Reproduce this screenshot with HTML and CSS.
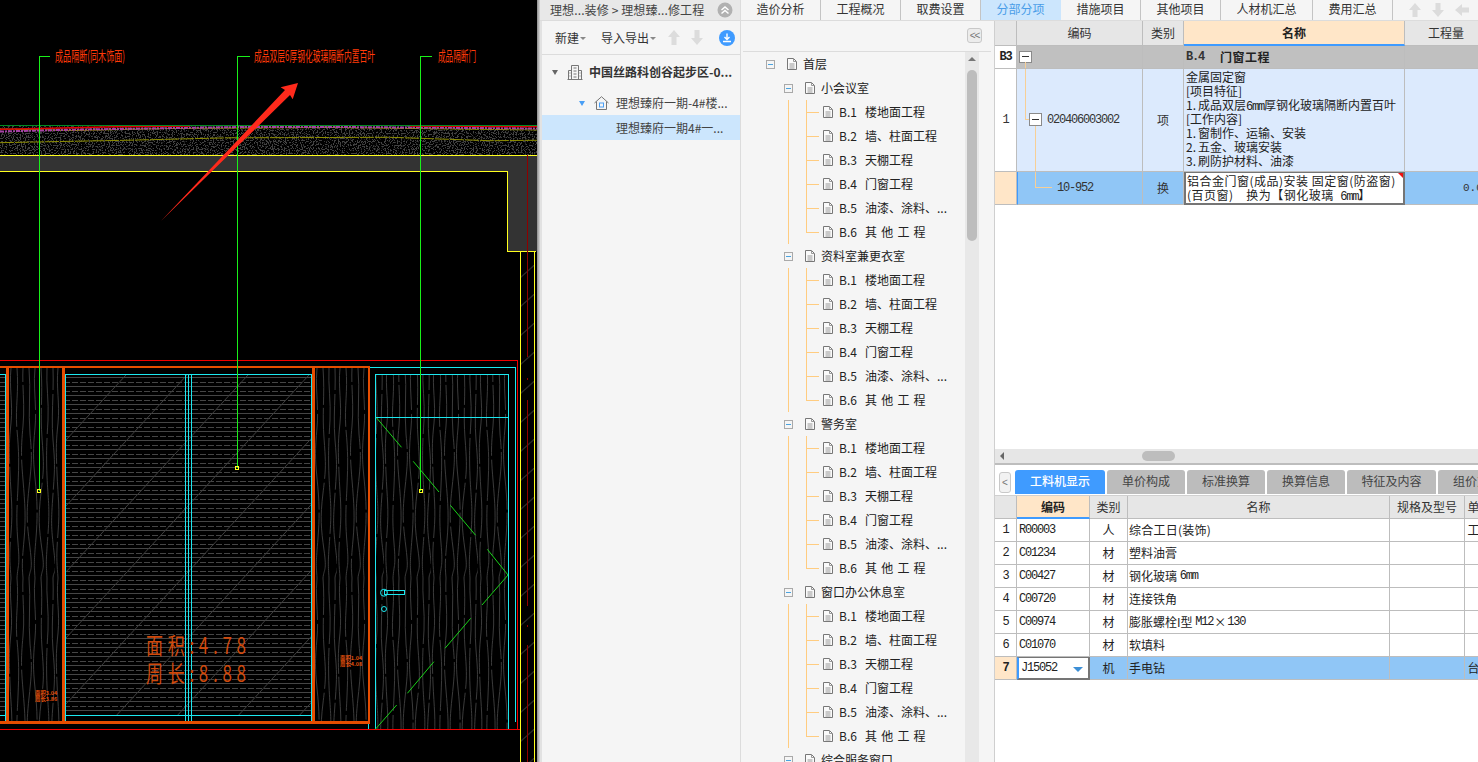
FILE: index.html
```html
<!DOCTYPE html>
<html lang="zh-CN">
<head>
<meta charset="utf-8">
<title>理想臻府一期</title>
<link rel="stylesheet" href="styles.css">
</head>
<body>
<svg class="defs" width="0" height="0">
  <symbol id="doc" viewBox="0 0 10 12"><path class="doc-page" d="M.5.5h6l3 3v8H.5z"/><path class="doc-fold" d="M6.500.5v3h3M2.500 6h5M2.500 8h5M2.500 10h5"/></symbol>
</svg>
<div class="app">
  <div class="cad">
    <svg class="cad-svg" width="537" height="762" viewBox="0 0 537 762">
      <defs>
        <pattern id="wood" width="47" height="210" patternUnits="userSpaceOnUse" x="8" y="368">
          <g class="grain">
            <path d="M3 0C1 20 5 35 3 55S1 80 2 105S5 140 3 165S2 195 3 210"/>
            <path d="M9 0C11 25 7 40 9 62S11 95 10 118S8 150 10 175S10 195 9 210"/>
            <path d="M15 0C14 18 17 36 15 58S13 88 15 112S18 150 16 172S14 198 15 210"/>
            <path d="M21 0C23 22 20 44 22 66S24 92 21 120S19 155 22 180S22 200 21 210"/>
            <path d="M27 0C25 20 29 38 27 60S25 90 27 110S30 145 28 170S26 195 27 210"/>
            <path d="M33 0C35 26 32 42 34 70S36 100 33 125S31 160 34 182S34 200 33 210"/>
            <path d="M39 0C38 16 41 34 40 52S38 84 39 108S42 138 40 166S38 194 39 210"/>
            <path d="M45 0C46 24 43 48 45 72S47 98 45 126S43 158 46 184S46 200 45 210"/>
          </g>
        </pattern>
        <pattern id="louvre" width="8" height="9" patternUnits="userSpaceOnUse" y="375">
          <path class="hatch flat" d="M0 2.500H8"/>
          <path class="hatch flat" d="M0 7H5.500"/>
        </pattern>
        <pattern id="diag" width="61" height="66" patternUnits="userSpaceOnUse" x="65" y="375">
          <path class="hatch dim" d="M0 66L61 0"/>
        </pattern>
        <pattern id="strip" width="14" height="29" patternUnits="userSpaceOnUse" x="520.500" y="265">
          <path class="hatch" d="M0 12.500L14 0"/>
        </pattern>
        <filter id="speck" x="0" y="0" width="100%" height="100%" color-interpolation-filters="sRGB">
          <feTurbulence type="fractalNoise" baseFrequency=".75" numOctaves="2" seed="7"/>
          <feColorMatrix values="0 0 0 0 .26 0 0 0 0 .26 0 0 0 0 .26 0 0 0 14 -7.300"/>
        </filter>
      </defs>

      <rect class="speckle" x="0" y="126" width="537" height="29" filter="url(#speck)"/>
      <path class="band-olive" d="M0 142.700L60 141.500L125 140.300L230 137.800L390 137.300L490 140.700L537 140.300"/>
      <path class="band-olive" d="M0 129L75 130.500L170 128.500L330 127.500L537 130"/>
      <path class="band-purple" d="M0 131.500L80 129.500L240 127L340 127L537 128.500"/>
      <path class="band-red" d="M0 129.300L40 128.500L115 126.700L190 126M410 126L537 126.600"/>
      <path class="band-green" d="M0 125.500H537"/>

      <path class="wall" d="M0 155.500H537V251.300H507.500V171.500H0z"/>
      <path class="yellow" d="M0 155.500H537M0 171.500H507.500V251.500H535.500M520.500 251.500V762M534.500 251.500V762"/>
      <rect class="strip" x="521" y="252" width="13" height="510"/>
      <path class="darkred" d="M527.500 155V357M527.500 378V380M527.500 400V606M527.500 625V627M527.500 645V762"/>

      <rect class="wood" x="8" y="368" width="56" height="354"/>
      <rect class="wood" x="315" y="368" width="53" height="354"/>
      <rect class="wood" x="376" y="375" width="132" height="354"/>
      <rect class="louvre" x="0" y="375" width="5" height="340"/>
      <rect class="louvre" x="66" y="375" width="245" height="340"/>
      <rect class="diag" x="66" y="375" width="245" height="340"/>

      <path class="cyan" d="M0 374.500H5.500V715.500H0M65.500 722V374.500H311.500V722M65.500 715.500H311.500M5.500 715.500V722M185.500 374.500V722M188.500 374.500V722M191.500 374.500V722"/>
      <path class="cyan" d="M369 367.500H515.500V722M368.500 722V729M375.500 729V374.500H508.500V729M375.500 417.500H508.500"/>
      <path class="red" d="M0 360.500H517.500V729.500M0 729.500H520"/>
      <path class="orange" d="M0 367H368.800V722.700H0M7.200 367V722.700M63.400 367V722.700M313.700 367V722.700"/>

      <path class="door-green" d="M376.400 417.700L401.500 447.300M413.200 461.300L439 492M450.400 505.300L475.600 535.300M487.300 549.300L508 575L482 605M470.700 618.300L445 648.300M433.900 661.700L407.400 693.300M396.700 705L375.300 729.300"/>
      <circle class="round" cx="384" cy="592.700" r="3.500"/>
      <rect class="cyan" x="384.500" y="590.500" width="20" height="4"/>
      <circle class="round" cx="384" cy="609" r="2.500"/>

      <path class="leader" d="M50 56.500H39.500V491M250 56.500H237.500V468M432 56.500H420.500V491"/>
      <path class="leader-end" d="M37.500 489.500h3v3h-3zM235.500 466.500h3v3h-3zM419.500 489.500h3v3h-3z"/>

      <text class="note" x="55" y="33" textLength="70" lengthAdjust="spacingAndGlyphs">成品隔断(同木饰面)</text>
      <text class="note" x="254" y="33" textLength="121" lengthAdjust="spacingAndGlyphs">成品双层6厚钢化玻璃隔断内置百叶</text>
      <text class="note" x="438" y="33" textLength="38" lengthAdjust="spacingAndGlyphs">成品隔断门</text>

      <text class="area" x="146" y="492" textLength="100" lengthAdjust="spacing">面积:4.78</text>
      <text class="area" x="146" y="512.500" textLength="100" lengthAdjust="spacing">周长:8.88</text>
      <text class="tiny" x="35" y="695">面积3.04</text>
      <text class="tiny" x="35" y="701">周长3.86</text>
      <text class="tiny" x="340" y="660">面积1.04</text>
      <text class="tiny" x="340" y="666">周长4.08</text>

      <polygon class="arrow" points="298,83 280.600,87.300 285,90 161,221 290,95 292.700,99.300"/>
    </svg>
  </div>
  <div class="divider"></div>

  <aside class="sidebar">
    <div class="crumbs">
      <span class="crumb-text">理想...装修 &gt; 理想臻...修工程</span>
      <svg class="crumb-btn" width="16" height="16" viewBox="0 0 16 16"><circle class="c-gray" cx="8" cy="8" r="7.500"/><path class="chev" d="M4.500 8L8 5l3.500 3M4.500 11.500L8 8.500l3.500 3"/></svg>
    </div>
    <div class="toolbar">
      <span class="tool">新建</span><i class="caret"></i>
      <span class="tool tool-io">导入导出</span><i class="caret"></i>
      <svg class="tool-arrow arrow-up" width="12" height="15" viewBox="0 0 12 15"><path class="a-gray" d="M6 0L12 7H8.500V15H3.500V7H0z"/></svg>
      <svg class="tool-arrow arrow-down" width="12" height="15" viewBox="0 0 12 15"><path class="a-gray" d="M6 15L12 8H8.500V0H3.500V8H0z"/></svg>
      <svg class="tool-dl" width="16" height="16" viewBox="0 0 16 16"><circle class="c-blue" cx="8" cy="8" r="8"/><path class="dl" d="M8 3.500V9M5.500 7L8 9.500 10.500 7M4 11.500H12"/></svg>
    </div>
    <ul class="projects">
      <li class="proj proj-root">
        <i class="tri tri-dark"></i>
        <svg class="proj-icon" width="16" height="16" viewBox="0 0 16 16"><path class="bld" d="M.5 15.500h15M1.500 15.500V6.500h3v9M4.500 15.500V1.500h7v14M11.500 6.500h3v9M6.500 4h3M6.500 7h3M6.500 10h3M6.500 13h3M2.500 9h1M2.500 12h1M12.500 9h1M12.500 12h1"/></svg>
        <span class="proj-name proj-bold">中国丝路科创谷起步区-0...</span>
      </li>
      <li class="proj proj-sub">
        <i class="tri tri-blue"></i>
        <svg class="proj-icon" width="15" height="14" viewBox="0 0 15 14"><path class="bld" d="M.5 7L7.500.7 14.500 7M2.500 5.500V13.500H12.500V5.500"/><rect class="home-door" x="5.500" y="7" width="4" height="4"/></svg>
        <span class="proj-name">理想臻府一期-4#楼...</span>
      </li>
      <li class="proj proj-sel"><span class="proj-name">理想臻府一期4#一...</span></li>
    </ul>
  </aside>

  <div class="work">
    <nav class="tabs">
      <a class="tab">造价分析</a>
      <a class="tab">工程概况</a>
      <a class="tab">取费设置</a>
      <a class="tab tab-on">分部分项</a>
      <a class="tab">措施项目</a>
      <a class="tab">其他项目</a>
      <a class="tab tab-wide">人材机汇总</a>
      <a class="tab">费用汇总</a>
      <div class="tab-tools">
        <svg width="12" height="14" viewBox="0 0 12 14"><path class="a-gray" d="M6 0L12 7H8.500V14H3.500V7H0z"/></svg>
        <svg width="12" height="14" viewBox="0 0 12 14"><path class="a-gray" d="M6 14L12 7H8.500V0H3.500V7H0z"/></svg>
        <svg width="14" height="12" viewBox="0 0 14 12"><path class="a-gray" d="M0 6L7 0V3.500H14V8.500H7V12z"/></svg>
      </div>
    </nav>
    <div class="panes">
      <section class="tree">
        <div class="tree-head"><button class="fold">&lt;&lt;</button></div>
        <div class="tree-body">
          <div class="tree-list">
            <div class="node root"><i class="box"></i><svg class="doc"><use href="#doc"/></svg><span>首层</span></div>

            <div class="node lvl2"><i class="box"></i><svg class="doc"><use href="#doc"/></svg><span>小会议室</span></div>
            <div class="leaves">
              <div class="node leaf"><svg class="doc"><use href="#doc"/></svg><b class="code">B.1</b><span>楼地面工程</span></div>
              <div class="node leaf"><svg class="doc"><use href="#doc"/></svg><b class="code">B.2</b><span>墙、柱面工程</span></div>
              <div class="node leaf"><svg class="doc"><use href="#doc"/></svg><b class="code">B.3</b><span>天棚工程</span></div>
              <div class="node leaf"><svg class="doc"><use href="#doc"/></svg><b class="code">B.4</b><span>门窗工程</span></div>
              <div class="node leaf"><svg class="doc"><use href="#doc"/></svg><b class="code">B.5</b><span>油漆、涂料、...</span></div>
              <div class="node leaf"><svg class="doc"><use href="#doc"/></svg><b class="code">B.6</b><span>其 他 工 程</span></div>
            </div>

            <div class="node lvl2"><i class="box"></i><svg class="doc"><use href="#doc"/></svg><span>资料室兼更衣室</span></div>
            <div class="leaves">
              <div class="node leaf"><svg class="doc"><use href="#doc"/></svg><b class="code">B.1</b><span>楼地面工程</span></div>
              <div class="node leaf"><svg class="doc"><use href="#doc"/></svg><b class="code">B.2</b><span>墙、柱面工程</span></div>
              <div class="node leaf"><svg class="doc"><use href="#doc"/></svg><b class="code">B.3</b><span>天棚工程</span></div>
              <div class="node leaf"><svg class="doc"><use href="#doc"/></svg><b class="code">B.4</b><span>门窗工程</span></div>
              <div class="node leaf"><svg class="doc"><use href="#doc"/></svg><b class="code">B.5</b><span>油漆、涂料、...</span></div>
              <div class="node leaf"><svg class="doc"><use href="#doc"/></svg><b class="code">B.6</b><span>其 他 工 程</span></div>
            </div>

            <div class="node lvl2"><i class="box"></i><svg class="doc"><use href="#doc"/></svg><span>警务室</span></div>
            <div class="leaves">
              <div class="node leaf"><svg class="doc"><use href="#doc"/></svg><b class="code">B.1</b><span>楼地面工程</span></div>
              <div class="node leaf"><svg class="doc"><use href="#doc"/></svg><b class="code">B.2</b><span>墙、柱面工程</span></div>
              <div class="node leaf"><svg class="doc"><use href="#doc"/></svg><b class="code">B.3</b><span>天棚工程</span></div>
              <div class="node leaf"><svg class="doc"><use href="#doc"/></svg><b class="code">B.4</b><span>门窗工程</span></div>
              <div class="node leaf"><svg class="doc"><use href="#doc"/></svg><b class="code">B.5</b><span>油漆、涂料、...</span></div>
              <div class="node leaf"><svg class="doc"><use href="#doc"/></svg><b class="code">B.6</b><span>其 他 工 程</span></div>
            </div>

            <div class="node lvl2"><i class="box"></i><svg class="doc"><use href="#doc"/></svg><span>窗口办公休息室</span></div>
            <div class="leaves">
              <div class="node leaf"><svg class="doc"><use href="#doc"/></svg><b class="code">B.1</b><span>楼地面工程</span></div>
              <div class="node leaf"><svg class="doc"><use href="#doc"/></svg><b class="code">B.2</b><span>墙、柱面工程</span></div>
              <div class="node leaf"><svg class="doc"><use href="#doc"/></svg><b class="code">B.3</b><span>天棚工程</span></div>
              <div class="node leaf"><svg class="doc"><use href="#doc"/></svg><b class="code">B.4</b><span>门窗工程</span></div>
              <div class="node leaf"><svg class="doc"><use href="#doc"/></svg><b class="code">B.5</b><span>油漆、涂料、...</span></div>
              <div class="node leaf"><svg class="doc"><use href="#doc"/></svg><b class="code">B.6</b><span>其 他 工 程</span></div>
            </div>

            <div class="node lvl2"><i class="box"></i><svg class="doc"><use href="#doc"/></svg><span>综合服务窗口</span></div>
          </div>
          <div class="vscroll"><i class="v-up"></i><i class="v-thumb"></i></div>
        </div>
      </section>

      <main class="main">
        <div class="grid grid-top ghead">
          <div class="c"></div><div class="c">编码</div><div class="c">类别</div><div class="c c-active">名称</div><div class="c">工程量</div>
        </div>
        <div class="grid grid-top row-b3">
          <div class="c rh mono-b">B3</div>
          <div class="c c-wires"><i class="pm pm-a"></i><i class="wire wire-a"></i></div>
          <div class="c"></div>
          <div class="c c-left title"><b class="mono-b">B.4</b><b class="title-cn">门窗工程</b></div>
          <div class="c"></div>
        </div>
        <div class="grid grid-top row-item">
          <div class="c rh mono">1</div>
          <div class="c c-code"><i class="wire wire-b"></i><i class="wire wire-c"></i><i class="pm pm-b"></i><span class="mono">020406003002</span></div>
          <div class="c">项</div>
          <div class="c c-left lines item-lines">
            <div>金属固定窗</div>
            <div>[项目特征]</div>
            <div><span class="idx">1.</span>成品双层<span class="mono">6mm</span>厚钢化玻璃隔断内置百叶</div>
            <div>[工作内容]</div>
            <div><span class="idx">1.</span>窗制作、运输、安装</div>
            <div><span class="idx">2.</span>五金、玻璃安装</div>
            <div><span class="idx">3.</span>刷防护材料、油漆</div>
          </div>
          <div class="c"></div>
        </div>
        <div class="grid grid-top row-sub">
          <div class="c rh rh-on"></div>
          <div class="c c-sel c-code2"><i class="wire wire-d"></i><i class="wire wire-e"></i><span class="mono">10-952</span></div>
          <div class="c">换</div>
          <div class="c c-left c-edit lines edit-lines">
            <div>铝合金门窗(成品)安装 固定窗(防盗窗)</div>
            <div>(百页窗)    换为【钢化玻璃  <span class="mono">6mm</span>】</div>
            <i class="flag"></i>
          </div>
          <div class="c c-qty">0.06</div>
        </div>
        <div class="blank"></div>
        <div class="hscroll"><i class="h-left"></i><i class="h-thumb"></i></div>
        <div class="subtabs">
          <button class="sub-back">&lt;</button>
          <a class="sub sub-on sub-first">工料机显示</a>
          <a class="sub">单价构成</a>
          <a class="sub">标准换算</a>
          <a class="sub">换算信息</a>
          <a class="sub sub-wide">特征及内容</a>
          <a class="sub">组价方案</a>
        </div>
        <div class="grid grid-low ghead-low">
          <div class="c"></div><div class="c c-active">编码</div><div class="c">类别</div><div class="c">名称</div><div class="c">规格及型号</div><div class="c">单位</div>
        </div>
        <div class="grid grid-low row-low">
          <div class="c rh mono">1</div><div class="c c-left mono">R00003</div><div class="c">人</div><div class="c c-left wide-paren">综合工日(装饰)</div><div class="c"></div><div class="c">工日</div>
        </div>
        <div class="grid grid-low row-low">
          <div class="c rh mono">2</div><div class="c c-left mono">C01234</div><div class="c">材</div><div class="c c-left">塑料油膏</div><div class="c"></div><div class="c"></div>
        </div>
        <div class="grid grid-low row-low">
          <div class="c rh mono">3</div><div class="c c-left mono">C00427</div><div class="c">材</div><div class="c c-left">钢化玻璃 <span class="mono">6mm</span></div><div class="c"></div><div class="c"></div>
        </div>
        <div class="grid grid-low row-low">
          <div class="c rh mono">4</div><div class="c c-left mono">C00720</div><div class="c">材</div><div class="c c-left">连接铁角</div><div class="c"></div><div class="c"></div>
        </div>
        <div class="grid grid-low row-low">
          <div class="c rh mono">5</div><div class="c c-left mono">C00974</div><div class="c">材</div><div class="c c-left">膨胀螺栓I型 <span class="mono">M12</span><span class="times">×</span><span class="mono">130</span></div><div class="c"></div><div class="c"></div>
        </div>
        <div class="grid grid-low row-low">
          <div class="c rh mono">6</div><div class="c c-left mono">C01070</div><div class="c">材</div><div class="c c-left">软填料</div><div class="c"></div><div class="c"></div>
        </div>
        <div class="grid grid-low row-low row-sel">
          <div class="c rh rh-on mono-b">7</div><div class="c c-left mono c-edit c-drop">J15052<i class="drop"></i></div><div class="c">机</div><div class="c c-left">手电钻</div><div class="c"></div><div class="c">台班</div>
        </div>
      </main>
    </div>
  </div>
</div>
</body>
</html>
```

FILE: styles.css
```css
* { box-sizing: border-box; }
html, body { margin: 0; height: 100%; overflow: hidden; background: #fff; }
body { font: 12px/16px "Noto Sans CJK SC", "Noto Sans", sans-serif; color: #2b2b2b; }
.defs { position: absolute; }
ul { list-style: none; margin: 0; padding: 0; }
i { display: block; }
.app { display: flex; width: 1478px; height: 762px; overflow: hidden; }

/* CAD canvas */
.cad { width: 537px; height: 762px; background: #000; flex: none; }
.cad-svg { display: block; }
.cad-svg path, .cad-svg circle { fill: none; }
.cad-svg .grain path { stroke: #3a3a3a; stroke-width: 1; stroke-dasharray: 96 3 71 4; }
.cad-svg .grain path:nth-child(2) { stroke-dashoffset: 37; }
.cad-svg .grain path:nth-child(3) { stroke-dashoffset: 82; }
.cad-svg .grain path:nth-child(4) { stroke-dashoffset: 15; }
.cad-svg .grain path:nth-child(5) { stroke-dashoffset: 128; }
.cad-svg .grain path:nth-child(6) { stroke-dashoffset: 59; }
.cad-svg .grain path:nth-child(7) { stroke-dashoffset: 104; }
.cad-svg .grain path:nth-child(8) { stroke-dashoffset: 148; }
.cad-svg .hatch { stroke: #454545; stroke-width: 1; }
.cad-svg .flat { shape-rendering: crispEdges; }
.cad-svg .dim { stroke: #3c3c3c; }
.speckle { fill: #fff; }
.wood { fill: url(#wood); }
.louvre { fill: url(#louvre); }
.diag { fill: url(#diag); }
.strip { fill: url(#strip); }
.cad-svg .band-olive { stroke: #8d8d00; stroke-width: 1; stroke-dasharray: 14 1; }
.cad-svg .band-purple { stroke: #a642a6; stroke-width: 2; stroke-dasharray: 4 1 2 1; }
.cad-svg .band-red { stroke: #e00000; stroke-width: 1.5; }
.cad-svg .band-green { stroke: #008a20; stroke-width: 1; shape-rendering: crispEdges; }
.cad-svg .wall { fill: #333; }
.cad-svg .yellow { stroke: #ffff1e; stroke-width: 1; shape-rendering: crispEdges; }
.cad-svg .darkred { stroke: #8e0000; stroke-width: 1; shape-rendering: crispEdges; }
.cad-svg .cyan { stroke: #1ce8f0; stroke-width: 1; fill: none; shape-rendering: crispEdges; }
.cad-svg .round { stroke: #1ce8f0; stroke-width: 1; }
.cad-svg .red { stroke: #f00000; stroke-width: 1; shape-rendering: crispEdges; }
.cad-svg .orange { stroke: #e54d00; stroke-width: 2.6; shape-rendering: crispEdges; }
.cad-svg .door-green { stroke: #19d319; stroke-width: 1; }
.cad-svg .leader { stroke: #19f019; stroke-width: 1; shape-rendering: crispEdges; }
.cad-svg .leader-end { stroke: #ffff1e; stroke-width: 1; shape-rendering: crispEdges; }
.note { fill: #ff3a08; font: 7.6px "Noto Sans CJK SC", sans-serif; transform: scale(1, 1.85); }
.area { fill: #d14a0c; font: 17px "Noto Sans CJK SC", sans-serif; transform: scale(1, 1.33); }
.tiny { fill: #e2500c; font: bold 5.4px "Noto Sans CJK SC", sans-serif; }
.arrow { fill: #ff2a1c; }

.divider { width: 3px; flex: none; background: linear-gradient(90deg, #8d8d8d, #d8d8d8); }

/* Project sidebar */
.sidebar { width: 201px; flex: none; height: 762px; background: #f5f5f5; border-left: 2px solid #e2e2e2; border-right: 1px solid #dcdcdc; }
.crumbs { height: 21px; margin-left: -2px; background: #e8e8e8; border-bottom: 1px solid #dcdcdc; display: flex; align-items: center; padding-left: 10px; color: #444; }
.crumb-text { width: 167px; white-space: pre; letter-spacing: .01em; }
.c-gray { fill: #b1b1b1; }
.chev { fill: none; stroke: #fff; stroke-width: 1.5; }
.toolbar { height: 34px; display: flex; align-items: center; padding-left: 13px; border-bottom: 1px solid #dcdcdc; }
.tool { color: #333; }
.tool-io { margin-left: 15px; }
.caret { width: 0; height: 0; margin: 2px 0 0 1px; border: 3px solid transparent; border-top-color: #888; border-bottom: 0; }
.tool-arrow { margin-left: 11px; }
.arrow-up { margin-left: 12px; }
.a-gray { fill: #dcdcdc; }
.tool-dl { margin-left: 16px; }
.c-blue { fill: #3f9bff; }
.dl { fill: none; stroke: #fff; stroke-width: 1.4; }
.proj { display: flex; align-items: center; white-space: nowrap; color: #444; }
.proj-root { height: 34px; padding-left: 10px; }
.proj-sub { height: 26px; padding: 2px 0 0 37px; }
.proj-sel { height: 25px; background: #cce6fd; padding-left: 74px; }
.tri { width: 0; height: 0; border: 3.5px solid transparent; border-bottom: 0; border-top-width: 5px; }
.tri-dark { border-top-color: #666; }
.tri-blue { border-top-color: #4a9ff5; }
.proj-icon { margin-left: 9px; flex: none; }
.proj-name { margin-left: 6px; }
.proj-sub .proj-name { margin-left: 7px; }
.proj-sel .proj-name { margin-left: 0; }
.proj-bold { font-weight: 700; color: #333; }
.bld { fill: none; stroke: #777; stroke-width: 1; }
.home-door { fill: none; stroke: #4a9ff5; stroke-width: 1; }

/* Work column */
.work { width: 737px; flex: none; height: 762px; display: flex; flex-direction: column; }
.tabs { height: 21px; flex: none; display: flex; background: #f5f5f5; border-bottom: 1px solid #dcdcdc; }
.tab { width: 80px; height: 20px; text-align: center; line-height: 17px; color: #333; border-right: 1px solid #c4c4c4; }
.tab-wide { width: 92px; }
.tab-on { background: #cce6fd; color: #4a9de8; border-right-color: #cce6fd; }
.tab-tools { display: flex; align-items: center; gap: 11px; padding-left: 16px; }
.panes { flex: 1; display: flex; min-height: 0; }

/* Tree */
.tree { width: 254px; flex: none; display: flex; flex-direction: column; background: #f5f5f5; border-right: 1px solid #cfcfcf; }
.tree-head { height: 31px; flex: none; margin: 0 3px 0 2px; border-bottom: 1px solid #dcdcdc; display: flex; justify-content: flex-end; padding: 7px 9px 0 0; }
.fold { width: 15px; height: 15px; padding: 0; font: 10px/12px "Liberation Sans", sans-serif; letter-spacing: -1px; color: #777; background: #ececec; border: 1px solid #c8c8c8; border-radius: 3px; }
.tree-body { flex: 1; display: flex; min-height: 0; overflow: hidden; }
.tree-list { width: 224px; flex: none; }
.node { height: 24px; display: flex; align-items: center; position: relative; white-space: pre; color: #222; word-spacing: 1.5px; }
.box { width: 9px; height: 9px; border: 1px solid #a9a9a9; margin-right: 12px; position: relative; background: #f5f5f5; }
.box::after { content: ""; position: absolute; left: 1px; right: 1px; top: 3px; height: 1px; background: #4aa3df; }
.doc { width: 10px; height: 12px; flex: none; margin-right: 6px; }
.doc-page { fill: #fafafa; stroke: #777; }
.doc-fold { fill: none; stroke: #999; }
.root { padding-left: 25px; }
.lvl2 { padding-left: 43px; }
.leaves { position: relative; }
.leaves::before { content: ""; position: absolute; left: 47px; top: 0; bottom: 0; width: 1px; background: #ffcc80; }
.leaf { padding-left: 82px; }
.leaf::before { content: ""; position: absolute; left: 65px; top: 0; bottom: 0; width: 1px; background: #ffcc80; }
.leaf:last-child::before { bottom: 12px; }
.leaf::after { content: ""; position: absolute; left: 65px; top: 12px; width: 13px; height: 1px; background: #ffcc80; }
.code { width: 26px; font-weight: 400; }
.vscroll { width: 14px; flex: none; background: #e8e8e8; position: relative; }
.v-up { position: absolute; left: 3px; top: 5px; width: 0; height: 0; border: 4px solid transparent; border-top: 0; border-bottom: 4px solid #777; }
.v-thumb { position: absolute; left: 2px; top: 18px; width: 10px; height: 171px; border-radius: 5px; background: #bdbdbd; }

/* Main grids */
.main { flex: 1; min-width: 0; overflow: hidden; background: #fff; }
.grid { display: grid; }
.grid-top { grid-template-columns: 22px 126px 41px 221px 83px; width: 493px; }
.grid-low { grid-template-columns: 22px 73px 38px 262px 75px 30px; width: 500px; }
.c { display: flex; align-items: center; justify-content: center; border-right: 1px solid #bdbdbd; border-bottom: 1px solid #bdbdbd; white-space: pre; overflow: hidden; position: relative; color: #333; }
.c-left { justify-content: flex-start; padding-left: 2px; }
.grid-low .c-left { padding-left: 1px; }
.grid-low .c-left.mono { padding-left: 2px; }
.mono { font: 12px/14px "Liberation Mono", monospace; letter-spacing: -1.2px; }
.mono-b { font: 700 12px/14px "Liberation Mono", monospace; letter-spacing: -1.2px; }
.idx { display: inline-block; width: 12px; }
.times { display: inline-block; width: 14px; text-align: center; }
.wide-paren { letter-spacing: .25px; }
.ghead { height: 25px; background: #e6e6e6; }
.ghead .c-active, .ghead-low .c-active { background: #ffe6c8; font-weight: 700; border-bottom: 2px solid #3f9bff; color: #222; }
.row-b3 { height: 23px; background: #c0c0c0; }
.row-b3 .rh { background: #fff; color: #222; }
.rh { background: #fff; }
.title-cn { margin-left: 16px; letter-spacing: .5px; color: #222; }
.row-item { height: 103px; background: #dceafd; }
.lines { flex-direction: column; align-items: flex-start; justify-content: center; line-height: 14px; color: #222; }
.lines > div { height: 14px; }
.item-lines { padding-bottom: 2px; }
.row-sub { height: 33px; background: #90c6f6; }
.rh-on { background: #ffe6c8; }
.row-sub .c-sel { border-left: 1px solid #3f9bff; }
.c-edit { background: #fff; border: 2px solid #757575; border-top-width: 1px; }
.edit-lines { letter-spacing: .5px; padding-left: 1px; }
.flag { position: absolute; right: 0; top: 0; width: 0; height: 0; border-top: 5px solid #f01010; border-left: 5px solid transparent; }
.c-qty { justify-content: flex-start; padding-left: 58px; font: 11px "Liberation Mono", monospace; }

/* Tree wires over the grid cells */
.wire { position: absolute; background: #f7cf96; }
.wire-a { left: 8px; top: 16px; width: 1px; height: 7px; }
.wire-b { left: 8px; top: 0; width: 1px; height: 51px; }
.wire-c { left: 8px; top: 50px; width: 5px; height: 1px; }
.wire-d { left: 17px; top: 0; width: 1px; height: 16px; }
.wire-e { left: 17px; top: 15px; width: 17px; height: 1px; }
.pm { position: absolute; width: 13px; height: 13px; background: #fff; border: 1px solid #8a8a8a; }
.pm::after { content: ""; position: absolute; left: 2px; right: 2px; top: 5px; height: 1px; background: #333; }
.pm-a { left: 2px; top: 5px; height: 12px; }
.pm-a::after { top: 4px; }
.pm-b { left: 12px; top: 44px; }
.c-code { justify-content: flex-start; padding-left: 30px; }
.c-code2 { justify-content: flex-start; padding-left: 39px; }
.row-item .c-code::after { content: ""; position: absolute; left: 18px; top: 57px; width: 1px; height: 46px; background: #f7cf96; }

/* Scroll + sub tabs */
.blank { height: 244px; }
.hscroll { height: 16px; background: #e6e6e6; border-bottom: 2px solid #bdbdbd; position: relative; }
.h-left { position: absolute; left: 5px; top: 3px; width: 0; height: 0; border: 4px solid transparent; border-left: 0; border-right: 4px solid #666; }
.h-thumb { position: absolute; left: 147px; top: 2px; width: 33px; height: 10px; border-radius: 5px; background: #bdbdbd; }
.subtabs { height: 30px; display: flex; align-items: flex-end; gap: 2px; padding-bottom: 1px; }
.sub-back { flex: none; width: 12px; height: 21px; margin: 0 2px 1px 4px; padding: 0; font: 10px/12px "Liberation Sans", sans-serif; color: #777; background: #f2f2f2; border: 1px solid #c8c8c8; border-radius: 3px; }
.sub { width: 78px; height: 24px; line-height: 22px; text-align: center; background: #bcbcbc; color: #444; border-radius: 3px 3px 0 0; white-space: nowrap; flex: none; overflow: hidden; }
.sub-first { width: 90px; }
.sub-wide { width: 89px; }
.sub-on { background: #3f9bff; color: #fff; font-weight: 500; }
.ghead-low { height: 24px; background: #e6e6e6; border-top: 1px solid #d0d0d0; }
.row-low { height: 23px; }
.row-low .c { color: #222; }
.row-sel { background: #90c6f6; }
.row-sel .c-edit { background: #fff; border-left: 2px solid #3f9bff; justify-content: flex-start; }
.drop { position: absolute; right: 5px; top: 9px; width: 0; height: 0; border: 5px solid transparent; border-bottom: 0; border-top: 5px solid #3d8fd6; }
```
